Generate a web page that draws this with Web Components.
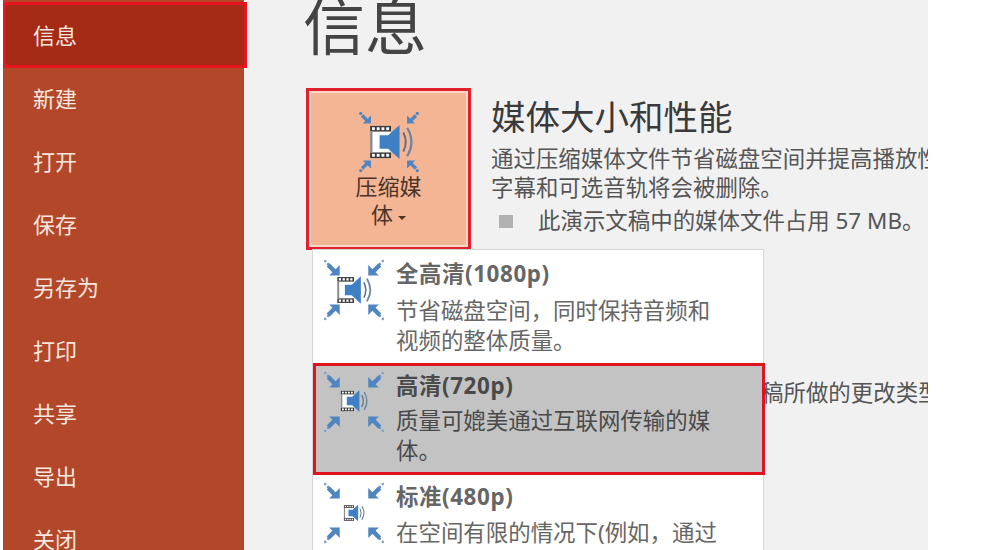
<!DOCTYPE html>
<html lang="zh">
<head>
<meta charset="utf-8">
<title>信息</title>
<style>
html, body { margin: 0; background: #fff; }
body { font-family: "Noto Sans", "Noto Sans CJK SC", sans-serif; }
</style>
</head>
<body>
<backstage-app>
    <backstage-nav slot="nav">
        <nav-item active>信息</nav-item>
        <nav-item>新建</nav-item>
        <nav-item>打开</nav-item>
        <nav-item>保存</nav-item>
        <nav-item>另存为</nav-item>
        <nav-item>打印</nav-item>
        <nav-item>共享</nav-item>
        <nav-item>导出</nav-item>
        <nav-item>关闭</nav-item>
    </backstage-nav>
    <info-page slot="main" heading="信息">
        <compress-button slot="button"></compress-button>
        <span slot="section-title">媒体大小和性能</span>
        <span slot="section-text">通过压缩媒体文件节省磁盘空间并提高播放性能。<br>字幕和可选音轨将会被删除。</span>
        <span slot="section-bullet">此演示文稿中的媒体文件占用 57 MB。</span>
        <span slot="note">稿所做的更改类型</span>
        <compress-menu slot="menu">
            <compress-option label="全高清(1080p)" film="0.76" film-y="0">节省磁盘空间，同时保持音频和视频的整体质量。</compress-option>
            <compress-option label="高清(720p)" film="0.6" film-y="-1" active>质量可媲美通过互联网传输的媒体。</compress-option>
            <compress-option label="标准(480p)" film="0.46" film-y="0">在空间有限的情况下(例如，通过</compress-option>
        </compress-menu>
    </info-page>
</backstage-app>

<script>
const ARROW_COLOR = "#4f85c0";

// film strip + speaker, drawn around 0,0 so it can be scaled
function filmMarkup(scale, dx, dy){
    let perfs = "";
    for(let x = -20; x < -1; x += 5){
        perfs += `<rect x="${x}" y="-15.5" width="3" height="3" fill="#fff"/><rect x="${x}" y="12.5" width="3" height="3" fill="#fff"/>`;
    }
    return `
    <g transform="translate(${31 + dx} ${32 + dy}) scale(${scale})">
        <rect x="-22" y="-17" width="22" height="34" fill="#fff"/>
        <rect x="-22" y="-17" width="22" height="6" fill="#3b3b3b"/>
        <rect x="-22" y="11" width="22" height="6" fill="#3b3b3b"/>
        <rect x="-22" y="-11" width="2.5" height="22" fill="#8a8a8a"/>
        ${perfs}
        <path d="M-12 -7H-3L9 -18V18L-3 7H-12Z" fill="#3f7fc4"/>
        <path d="M13 -10Q18 0 13 10" fill="none" stroke="#5b6f86" stroke-width="2"/>
        <path d="M17 -15Q26 0 17 15" fill="none" stroke="#6d85a0" stroke-width="2.4"/>
    </g>`;
}

function arrowMarkup(transform, dotted, size){
    const tail = dotted
        ? `<circle cx="2.5" cy="3.5" r="1.5" fill="#7fa3cb"/><circle cx="6" cy="7" r="1.6" fill="#6a94c4"/>`
        : `<circle cx="4" cy="5" r="2.4" fill="${ARROW_COLOR}"/>`;
    return `
    <g transform="${transform} scale(${size})">
        ${tail}
        <path d="M6 8L14 16" stroke="${ARROW_COLOR}" stroke-width="5"/>
        <path d="M19 20V8L16 11L12 15L7 20Z" fill="${ARROW_COLOR}"/>
    </g>`;
}

class MediaIcon extends HTMLElement {
    connectedCallback(){
        const film = parseFloat(this.getAttribute("film") || "1");
        const dx = parseFloat(this.getAttribute("film-x") || "0");
        const dy = parseFloat(this.getAttribute("film-y") || "0");
        const size = parseFloat(this.getAttribute("arrow") || "1");
        const dotted = this.hasAttribute("dotted");
        this.attachShadow({mode: "open"});
        this.shadowRoot.innerHTML = `
        <style>
        :host{ display: block; width: 62px; height: 64px; flex: none; }
        svg{ display: block; }
        </style>
        <svg width="62" height="64" viewBox="0 0 62 64">
            ${arrowMarkup("", dotted, size)}
            ${arrowMarkup("translate(62 0) scale(-1 1)", dotted, size)}
            ${arrowMarkup("translate(0 64) scale(1 -1)", dotted, size)}
            ${arrowMarkup("translate(62 64) scale(-1 -1)", dotted, size)}
            ${filmMarkup(film, dx, dy)}
        </svg>`;
    }
}

const appTemplate = document.createElement("template");
appTemplate.innerHTML = `
<style>
:host{
    display: flex;
    width: 928px;
    height: 550px;
    padding-left: 3px;
    box-sizing: border-box;
    overflow: hidden;
    background: #fff;
}
</style>
<slot name="nav"></slot>
<slot name="main"></slot>
`;

class BackstageApp extends HTMLElement {
    constructor(){
        super();
        this.attachShadow({mode: "open"});
        this.shadowRoot.appendChild(appTemplate.content.cloneNode(true));
    }
}

const navTemplate = document.createElement("template");
navTemplate.innerHTML = `
<style>
:host{
    display: flex;
    flex-direction: column;
    flex: none;
    position: relative;
    z-index: 1;
    width: 241px;
    height: 550px;
    padding-top: 2px;
    box-sizing: border-box;
    background: #b3472a;
}
</style>
<slot></slot>
`;

class BackstageNav extends HTMLElement {
    constructor(){
        super();
        this.attachShadow({mode: "open"});
        this.shadowRoot.appendChild(navTemplate.content.cloneNode(true));
    }
}

const navItemTemplate = document.createElement("template");
navItemTemplate.innerHTML = `
<style>
:host{
    display: flex;
    align-items: center;
    flex: none;
    height: 63px;
    padding: 0 0 6px 30px;
    box-sizing: border-box;
    font-size: 22px;
    color: #f6e6df;
}
:host([active]){
    height: 66px;
    margin-right: -3px;
    padding: 0 0 2px 27px;
    border: 3px solid #e8141f;
    background: #a62b17;
}
</style>
<slot></slot>
`;

class NavItem extends HTMLElement {
    constructor(){
        super();
        this.attachShadow({mode: "open"});
        this.shadowRoot.appendChild(navItemTemplate.content.cloneNode(true));
    }
}

const pageTemplate = document.createElement("template");
pageTemplate.innerHTML = `
<style>
:host{
    display: block;
    position: relative;
    flex: 1;
    height: 550px;
    overflow: hidden;
    padding-left: 62px;
    box-sizing: border-box;
    background: #f1f1f1;
}
h1{
    margin: 0 0 28px -3px;
    height: 60px;
    font-size: 62px;
    line-height: 52px;
    font-weight: 400;
    color: #444;
}
.row{
    display: flex;
    gap: 20px;
    height: 162px;
}
.title{
    height: 52px;
    font-size: 34.5px;
    line-height: 58px;
    color: #3a3a3a;
    white-space: nowrap;
}
.text{
    margin-top: 4px;
    font-size: 22.45px;
    line-height: 29px;
    color: #555;
    white-space: nowrap;
    width: 437px;
    overflow: hidden;
}
.bullet{
    display: flex;
    align-items: center;
    margin-top: 4px;
    font-size: 22.45px;
    line-height: 30px;
    color: #555;
    white-space: nowrap;
}
.bullet i{
    width: 14px;
    height: 13px;
    margin: 0 25px 0 8px;
    background: #b1b1b1;
}
.note{
    margin: 128px 0 0 455px;
    width: 167px;
    overflow: hidden;
    font-size: 22.45px;
    line-height: 30px;
    color: #555;
    white-space: nowrap;
}
.menu{
    position: absolute;
    left: 69px;
    top: 250px;
}
</style>
<h1></h1>
<div class="row">
    <slot name="button"></slot>
    <div class="section">
        <div class="title"><slot name="section-title"></slot></div>
        <div class="text"><slot name="section-text"></slot></div>
        <div class="bullet"><i></i><slot name="section-bullet"></slot></div>
    </div>
</div>
<div class="note"><slot name="note"></slot></div>
<div class="menu"><slot name="menu"></slot></div>
`;

class InfoPage extends HTMLElement {
    constructor(){
        super();
        this.attachShadow({mode: "open"});
        this.shadowRoot.appendChild(pageTemplate.content.cloneNode(true));
    }

    connectedCallback(){
        this.shadowRoot.querySelector("h1").textContent = this.getAttribute("heading");
    }
}

const buttonTemplate = document.createElement("template");
buttonTemplate.innerHTML = `
<style>
:host{
    display: flex;
    flex-direction: column;
    align-items: center;
    flex: none;
    width: 165px;
    height: 162px;
    padding-top: 19px;
    box-sizing: border-box;
    border: 3px solid #e0202c;
    box-shadow: inset 0 0 0 2px #f8d8ca;
    background: #f4b595;
    font-size: 22px;
    line-height: 28px;
    color: #4d3428;
    text-align: center;
}
.label{ margin-top: -2px; }
.caret{
    display: inline-block;
    width: 0;
    height: 0;
    margin-left: 5px;
    vertical-align: 3px;
    border: 4px solid transparent;
    border-top: 4px solid #4d3428;
    border-bottom: 0;
}
</style>
<media-icon film="0.95" film-x="2" arrow="0.68"></media-icon>
<div class="label">压缩媒<br>体<span class="caret"></span></div>
`;

class CompressButton extends HTMLElement {
    constructor(){
        super();
        this.attachShadow({mode: "open"});
        this.shadowRoot.appendChild(buttonTemplate.content.cloneNode(true));
    }
}

const menuTemplate = document.createElement("template");
menuTemplate.innerHTML = `
<style>
:host{
    display: block;
    width: 450px;
    height: 300px;
    padding-top: 1px;
    box-sizing: border-box;
    background: #fff;
    box-shadow: 0 0 0 1px #d4d4d4;
}
</style>
<slot></slot>
`;

class CompressMenu extends HTMLElement {
    constructor(){
        super();
        this.attachShadow({mode: "open"});
        this.shadowRoot.appendChild(menuTemplate.content.cloneNode(true));
    }
}

class CompressOption extends HTMLElement {
    connectedCallback(){
        const film = this.getAttribute("film");
        const filmY = this.getAttribute("film-y");
        this.attachShadow({mode: "open"});
        this.shadowRoot.innerHTML = `
        <style>
        :host{
            display: flex;
            gap: 11px;
            height: 112px;
            padding: 5px 0 0 7px;
            box-sizing: border-box;
            border: 3px solid transparent;
            color: #666;
        }
        :host([active]){
            margin: 0 -2px -1px 0;
            border-color: #e0141f;
            background: #c3c3c3;
            color: #4a4a4a;
        }
        media-icon{ margin-top: -1px; }
        .label{
            font-size: 22.4px;
            letter-spacing: 0.6px;
            line-height: 29px;
            font-weight: 700;
            white-space: nowrap;
            margin-bottom: 7px;
        }
        :host(:first-child) .label{ margin-bottom: 8px; }
        :host([active]) .label{ margin-bottom: 6px; }
        .desc{
            width: 322px;
            font-size: 22.45px;
            line-height: 30px;
        }
        </style>
        <media-icon dotted arrow="0.88" film="${film}" film-y="${filmY}"></media-icon>
        <div>
            <div class="label"></div>
            <div class="desc"><slot></slot></div>
        </div>`;
        this.shadowRoot.querySelector(".label").textContent = this.getAttribute("label");
    }
}

customElements.define("media-icon", MediaIcon);
customElements.define("backstage-app", BackstageApp);
customElements.define("backstage-nav", BackstageNav);
customElements.define("nav-item", NavItem);
customElements.define("info-page", InfoPage);
customElements.define("compress-button", CompressButton);
customElements.define("compress-menu", CompressMenu);
customElements.define("compress-option", CompressOption);
</script>
</body>
</html>
